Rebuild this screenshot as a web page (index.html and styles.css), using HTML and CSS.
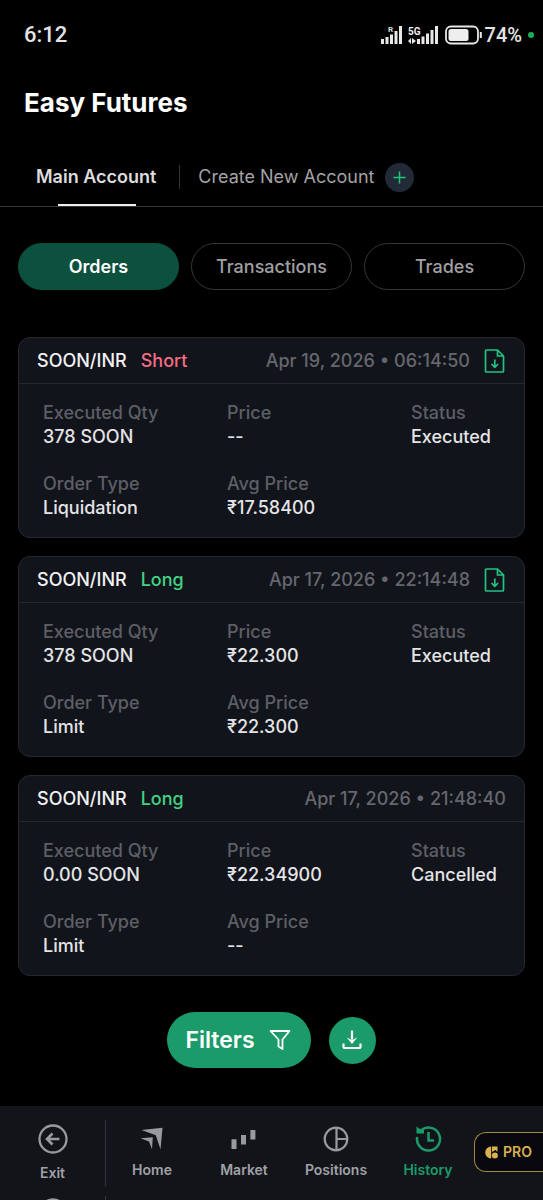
FILE: index.html
```html
<!DOCTYPE html>
<html lang="en">
<head>
<meta charset="utf-8">
<meta name="viewport" content="width=device-width, initial-scale=1">
<title>Easy Futures</title>
<link rel="stylesheet" href="styles.css">
</head>
<body>
<div class="app">
  <div class="status-bar">
    <span class="clock">6:12</span>
    <div class="indicators">
      <svg class="signals" width="60" height="22" viewBox="0 0 60 22" aria-hidden="true">
        <g fill="#e8e8e8">
          <rect x="1" y="15" width="3" height="5"/><rect x="5.500" y="13" width="3" height="7"/><rect x="10" y="10.500" width="3" height="9.500"/><rect x="14.500" y="7" width="3" height="13"/><rect x="19" y="2" width="3" height="18"/>
          <rect x="37" y="15" width="3" height="5"/><rect x="41.500" y="12.500" width="3" height="7.500"/><rect x="46" y="9.500" width="3" height="10.500"/><rect x="50.500" y="6" width="3" height="14"/><rect x="55" y="2" width="3" height="18"/>
          <path d="M31 14v6l-3-3zM32 14v6l4-3z"/>
        </g>
        <text x="8" y="8" class="signal-roam">R</text>
        <text x="28" y="11" class="signal-gen">5G</text>
      </svg>
      <svg class="battery" width="38" height="20" viewBox="0 0 38 20" aria-hidden="true">
        <rect x="1" y="1.500" width="32" height="17" rx="5" fill="none" stroke="#e8e8e8" stroke-width="1.8"/>
        <rect x="3.500" y="4" width="20" height="12" rx="2.500" fill="#eee"/>
        <path d="M35.800 7v6" stroke="#e8e8e8" stroke-width="2"/>
      </svg>
      <span class="percent">74%</span>
      <span class="privacy-dot"></span>
    </div>
  </div>

  <h1 class="title">Easy Futures</h1>

  <nav class="accounts">
    <button class="account active">Main Account</button>
    <span class="account-rule"></span>
    <button class="account">Create New Account
      <svg width="29" height="29" viewBox="0 0 29 29" aria-hidden="true"><circle cx="14.500" cy="14.500" r="14.500" fill="#222a38"/><path d="M14.500 8.500v12M8.500 14.500h12" stroke="#18c878" stroke-width="1.500"/></svg>
    </button>
  </nav>

  <div class="filters">
    <button class="pill selected">Orders</button>
    <button class="pill">Transactions</button>
    <button class="pill">Trades</button>
  </div>

  <main class="orders">
    <article class="card">
      <header class="card-head">
        <span class="pair">SOON/INR</span><span class="short">Short</span>
        <time class="time">Apr 19, 2026 • 06:14:50</time>
        <button class="file" aria-label="Download statement"><svg width="22" height="24" viewBox="0 0 22 24"><path d="M13.500 1H2.500Q1.500 1 1.500 2v20Q1.500 23 2.500 23h16q1 0 1-1V7zM13.500 1v6h6M10.800 10.500v7.500M7.500 15l3.300 3.300L14.100 15" fill="none" stroke="#22c281" stroke-width="1.700" stroke-linejoin="round"/></svg></button>
      </header>
      <dl class="details">
        <div><dt>Executed Qty</dt><dd>378 SOON</dd></div>
        <div><dt>Price</dt><dd>--</dd></div>
        <div><dt>Status</dt><dd>Executed</dd></div>
        <div><dt>Order Type</dt><dd>Liquidation</dd></div>
        <div><dt>Avg Price</dt><dd>₹17.58400</dd></div>
      </dl>
    </article>
    <article class="card">
      <header class="card-head">
        <span class="pair">SOON/INR</span><span class="long">Long</span>
        <time class="time">Apr 17, 2026 • 22:14:48</time>
        <button class="file" aria-label="Download statement"><svg width="22" height="24" viewBox="0 0 22 24"><path d="M13.500 1H2.500Q1.500 1 1.500 2v20Q1.500 23 2.500 23h16q1 0 1-1V7zM13.500 1v6h6M10.800 10.500v7.500M7.500 15l3.300 3.300L14.100 15" fill="none" stroke="#22c281" stroke-width="1.700" stroke-linejoin="round"/></svg></button>
      </header>
      <dl class="details">
        <div><dt>Executed Qty</dt><dd>378 SOON</dd></div>
        <div><dt>Price</dt><dd>₹22.300</dd></div>
        <div><dt>Status</dt><dd>Executed</dd></div>
        <div><dt>Order Type</dt><dd>Limit</dd></div>
        <div><dt>Avg Price</dt><dd>₹22.300</dd></div>
      </dl>
    </article>
    <article class="card">
      <header class="card-head">
        <span class="pair">SOON/INR</span><span class="long">Long</span>
        <time class="time">Apr 17, 2026 • 21:48:40</time>
      </header>
      <dl class="details">
        <div><dt>Executed Qty</dt><dd>0.00 SOON</dd></div>
        <div><dt>Price</dt><dd>₹22.34900</dd></div>
        <div><dt>Status</dt><dd>Cancelled</dd></div>
        <div><dt>Order Type</dt><dd>Limit</dd></div>
        <div><dt>Avg Price</dt><dd>--</dd></div>
      </dl>
    </article>
  </main>

  <div class="actions">
    <button class="filter-button">Filters
      <svg width="22" height="22" viewBox="0 0 22 22" aria-hidden="true"><path d="M1.500 2h19l-7 8.500v9.500l-4-2.500v-7z" fill="none" stroke="#fff" stroke-width="1.800" stroke-linejoin="round"/></svg>
    </button>
    <button class="download" aria-label="Download">
      <svg width="20" height="20" viewBox="0 0 20 20"><path d="M10 .5v9M1.500 13.500v3q0 1.500 1.500 1.500h14q1.500 0 1.500-1.500v-3" fill="none" stroke="#fff" stroke-width="2.200"/><path d="M4.800 7.500 10 10l5.200-2.500L10 14z" fill="#fff"/></svg>
    </button>
  </div>

  <footer class="bottom">
    <div class="exit-list">
      <button class="exit">
        <svg width="30" height="30" viewBox="0 0 30 30" aria-hidden="true"><g fill="none" stroke="#999aa0" stroke-width="2.300"><circle cx="15" cy="15" r="13.500"/><path d="M21.500 15H10M14.500 9.500 9 15l5.500 5.500" stroke-width="2.600"/></g></svg>
        Exit
      </button>
      <div class="exit next" aria-hidden="true">
        <svg width="30" height="30" viewBox="0 0 30 30"><circle cx="15" cy="15" r="13.500" fill="none" stroke="#999aa0" stroke-width="2.300"/></svg>
      </div>
    </div>
    <nav class="tabs">
      <a class="tab" href="#home"><svg width="24" height="24" viewBox="0 0 24 24" aria-hidden="true"><path fill="#999aa0" d="M1.500 3 22.500.8l-2 21.700-4.700-14.200zM.5 11.300 12.800 10.200 12 22.300 9 14.500z"/></svg>Home</a>
      <a class="tab" href="#market"><svg width="26" height="24" viewBox="-1 0 26 24" aria-hidden="true"><path fill="#999aa0" d="M-.5 12.300h5v9.700h-5zM9 8h5v9.500H9zM18.400 3h5v9.500h-5z"/></svg>Market</a>
      <a class="tab" href="#positions"><svg width="26" height="26" viewBox="0 0 26 26" aria-hidden="true"><g fill="none" stroke="#999aa0" stroke-width="2.200"><circle cx="13" cy="13" r="11.300"/><path d="M13.500 2v22M13.500 13h11"/></g></svg>Positions</a>
      <a class="tab current" href="#history"><svg width="28" height="28" viewBox="0 0 28 28" aria-hidden="true"><g fill="none" stroke="#1a9b69" stroke-width="2.500"><path d="M3.200 12a11.500 11.500 0 1 0 4-6.800M14.500 7v8.500h5.500"/></g><path fill="#1a9b69" d="M2.500 1.500l2.500 2 5 1v4h-7.500z"/></svg>History</a>
    </nav>
    <button class="pro">
      <svg width="13" height="13" viewBox="0 0 13 13" aria-hidden="true"><path fill="#d9b14e" d="M6.200.5v12A6 6 0 0 1 6.200.5zM7 .5h5.500v5.500L10.500 4 7 6z"/><circle cx="9.900" cy="9.500" r="3" fill="#d9b14e"/></svg>
      PRO
    </button>
  </footer>
</div>
</body>
</html>
```

FILE: styles.css
```css
* { box-sizing: border-box; }

body {
  margin: 0;
  background: #000;
  color: #e4e4e6;
  font: 500 18px/24px Inter, "Noto Sans", sans-serif;
}

button {
  margin: 0;
  padding: 0;
  border: 0;
  background: none;
  color: inherit;
  font: inherit;
  cursor: pointer;
}

svg { display: block; flex: none; }

.app {
  display: flex;
  flex-direction: column;
  min-height: 100vh;
}

.status-bar {
  display: flex;
  align-items: center;
  justify-content: space-between;
  height: 70px;
  padding: 0 9px 0 24px;
  font-family: Roboto, "Noto Sans", sans-serif;
}

.clock { font-size: 22px; }

.indicators { display: flex; align-items: center; }
.signals { margin-right: 5px; }
.signal-roam { font-size: 8px; font-weight: 700; fill: #ddd; }
.signal-gen { font-size: 10px; font-weight: 700; fill: #eee; }
.battery { margin-right: 2px; }
.percent { font-size: 20px; }

.privacy-dot {
  width: 6px;
  height: 6px;
  margin-left: 6px;
  border-radius: 50%;
  background: #16b05c;
}

.title {
  margin: 0;
  padding: 16px 24px 32px;
  color: #fff;
  font-size: 26px;
  font-weight: 700;
  line-height: 34px;
}

.accounts {
  display: flex;
  align-items: center;
  height: 55px;
  padding: 0 36px 4px;
  border-bottom: 1px solid #363636;
}

.account {
  position: relative;
  display: flex;
  align-items: center;
  gap: 10px;
  height: 100%;
  color: #a3a3a5;
  font-weight: 400;
}

.account.active { color: #ddd; font-weight: 600; }

.account.active::after {
  content: "";
  position: absolute;
  bottom: -4px;
  left: 18%;
  width: 65%;
  height: 2px;
  background: #eee;
}

.account-rule {
  width: 1px;
  height: 24px;
  margin: 0 18px 0 23px;
  background: #333;
}

.filters {
  display: grid;
  grid-template-columns: repeat(3, 1fr);
  gap: 12px;
  padding: 36px 18px 47px;
}

.pill {
  height: 47px;
  border: 1px solid #363636;
  border-radius: 24px;
  color: #a0a0a3;
}

.pill.selected { border-color: #0c503e; background: #0c503e; color: #fff; font-weight: 600; }

.orders {
  display: grid;
  gap: 18px;
  padding: 0 18px;
}

.card {
  border: 1px solid #25272e;
  border-radius: 12px;
  background: #12141c;
}

.card-head {
  display: flex;
  align-items: center;
  gap: 14px;
  height: 46px;
  padding: 0 18px;
  border-bottom: 1px solid #25272e;
}

.pair { color: #f2f2f3; }
.short { color: #f66c82; }
.long { color: #42d283; }
.time { margin-left: auto; color: #65676d; }

.details {
  display: grid;
  grid-template-columns: 2fr 2fr 1fr;
  row-gap: 23px;
  margin: 0;
  padding: 17px 21px 17px 24px;
}

dt { color: #5d5f65; }
dd { margin: 0; }

.actions {
  display: flex;
  align-items: center;
  justify-content: center;
  gap: 18px;
  padding: 36px 0;
}

.filter-button {
  display: flex;
  align-items: center;
  gap: 14px;
  height: 56px;
  padding: 0 20px 0 18px;
  border-radius: 28px;
  background: #1a9b69;
  color: #fff;
  font-size: 23px;
  font-weight: 600;
}

.download {
  display: grid;
  place-items: center;
  width: 47px;
  height: 47px;
  border-radius: 50%;
  background: #1a9b69;
}

.bottom {
  display: flex;
  height: 94px;
  margin-top: auto;
  overflow: hidden;
  background: #13141a;
  color: #a0a1a6;
  font-size: 14px;
  font-weight: 600;
  line-height: 20px;
}

.exit-list {
  display: flex;
  flex-direction: column;
  flex: none;
  gap: 10px;
  width: 106px;
  padding-top: 14px;
}

.exit {
  display: flex;
  flex: none;
  flex-direction: column;
  align-items: center;
  gap: 9px;
  height: 66px;
  padding-top: 4px;
  border-right: 1px solid #34353c;
}

.exit.next { padding-top: 2px; }

.tabs {
  display: grid;
  flex: 1;
  grid-template-columns: repeat(4, 1fr);
}

.tab {
  display: grid;
  grid-template-rows: 28px 20px;
  row-gap: 7px;
  place-items: center;
  align-content: start;
  padding-top: 19px;
  color: inherit;
  text-decoration: none;
}

.tab.current { color: #1a9b69; }

.pro {
  display: flex;
  align-items: center;
  gap: 5px;
  width: 69px;
  height: 40px;
  margin-top: 26px;
  padding-left: 10px;
  border: 1px solid #a08743;
  border-right: 0;
  border-radius: 12px 0 0 12px;
  background: #08080e;
  color: #d9b14e;
}
```
